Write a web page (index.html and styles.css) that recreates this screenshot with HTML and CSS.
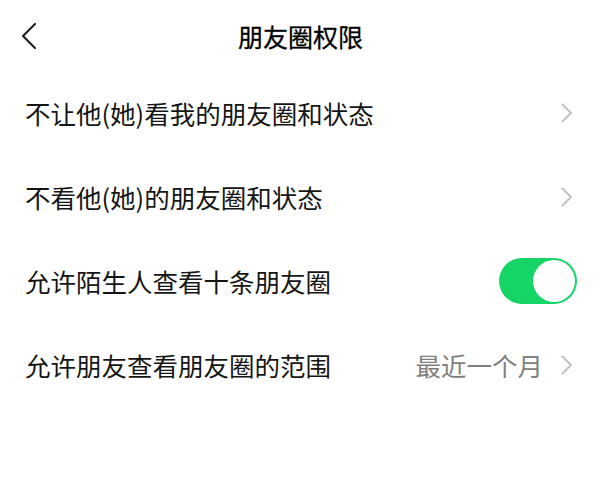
FILE: index.html
```html
<!DOCTYPE html>
<html lang="zh-CN">
<head>
<meta charset="utf-8">
<title>朋友圈权限</title>
<link rel="stylesheet" href="styles.css">
</head>
<body>
<div class="page">
  <header class="topbar">
    <button class="back" aria-label="返回">
      <svg width="16" height="28" viewBox="0 0 16 28"><polyline points="14,2 2,14 14,26" fill="none" stroke="#222" stroke-width="2.2" stroke-linecap="round" stroke-linejoin="round"/></svg>
    </button>
    <h1 class="title">朋友圈权限</h1>
    <span class="spacer"></span>
  </header>
  <ul class="list">
    <li class="row">
      <span class="label">不让他(她)看我的朋友圈和状态</span>
      <span class="right">
        <svg class="chev" width="12" height="20" viewBox="0 0 12 20"><polyline points="1.5,1.5 10,10 1.5,18.5" fill="none" stroke="#c2c2c2" stroke-width="2" stroke-linecap="round" stroke-linejoin="round"/></svg>
      </span>
    </li>
    <li class="row">
      <span class="label">不看他(她)的朋友圈和状态</span>
      <span class="right">
        <svg class="chev" width="12" height="20" viewBox="0 0 12 20"><polyline points="1.5,1.5 10,10 1.5,18.5" fill="none" stroke="#c2c2c2" stroke-width="2" stroke-linecap="round" stroke-linejoin="round"/></svg>
      </span>
    </li>
    <li class="row">
      <span class="label">允许陌生人查看十条朋友圈</span>
      <span class="right">
        <span class="switch on"><span class="knob"></span></span>
      </span>
    </li>
    <li class="row">
      <span class="label">允许朋友查看朋友圈的范围</span>
      <span class="right">
        <span class="value">最近一个月</span>
        <svg class="chev" width="12" height="20" viewBox="0 0 12 20"><polyline points="1.5,1.5 10,10 1.5,18.5" fill="none" stroke="#c2c2c2" stroke-width="2" stroke-linecap="round" stroke-linejoin="round"/></svg>
      </span>
    </li>
  </ul>
</div>
</body>
</html>
```
FILE: styles.css
```css
* { box-sizing: border-box; }
html, body {
  margin: 0;
  padding: 0;
  background: #ffffff;
}
body {
  font-family: "Noto Sans CJK SC", "Noto Sans", sans-serif;
  color: #151515;
}
.page {
  width: 600px;
  height: 479px;
  background: #fff;
}
.topbar {
  height: 71px;
  display: flex;
  align-items: center;
  padding: 0 20px 0 21px;
}
.back {
  width: 60px;
  height: 40px;
  padding: 0;
  border: 0;
  background: none;
  display: flex;
  align-items: center;
  justify-content: flex-start;
}
.back svg { display: block; }
.title {
  flex: 1;
  margin: 0;
  text-align: center;
  font-size: 25px;
  font-weight: 400;
  line-height: 32px;
  color: #000;
  -webkit-text-stroke: 0.3px #000;
}
.spacer { width: 60px; }
.list {
  list-style: none;
  margin: 0;
  padding: 0;
}
.row {
  height: 84px;
  display: flex;
  align-items: center;
  justify-content: space-between;
  padding: 0 23px 0 25px;
}
.label {
  font-size: 25.5px;
  line-height: 34px;
  color: #151515;
}
.right {
  display: flex;
  align-items: center;
}
.chev { display: block; margin-right: 4px; }
.value {
  font-size: 25.5px;
  line-height: 34px;
  color: #808080;
  margin-right: 18px;
}
.switch {
  width: 78px;
  height: 46px;
  border-radius: 23px;
  background: #15d566;
  display: flex;
  align-items: center;
  justify-content: flex-end;
  padding: 2px;
}
.knob {
  width: 42px;
  height: 42px;
  border-radius: 50%;
  background: #fff;
}
```
